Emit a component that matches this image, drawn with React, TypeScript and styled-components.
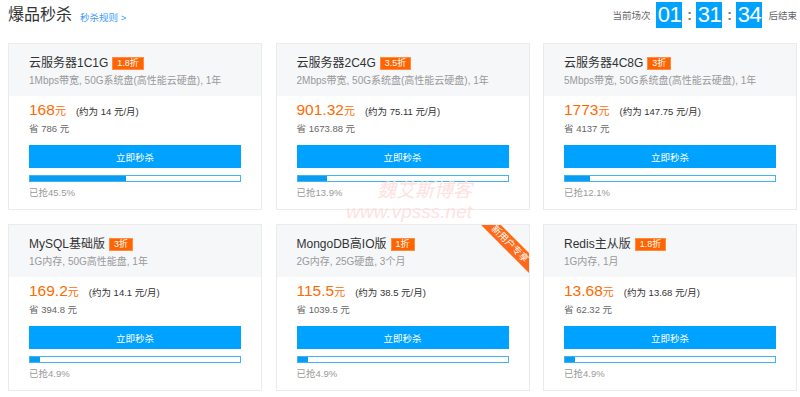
import React from "react";
import styled, { createGlobalStyle } from "styled-components";

const GlobalStyle = createGlobalStyle`
  * { box-sizing: border-box; }
  html, body { margin: 0; padding: 0; background: #fff; }
  body { font-family: "Liberation Sans", "Noto Sans CJK SC", Arial, sans-serif; color: #333; }
`;

const Page = styled.div`
  position: relative;
  width: 800px;
  height: 397px;
  padding: 0 3px 0 8px;
  overflow: hidden;
`;

const TopBar = styled.div`
  height: 30px;
  margin-bottom: 13px;
  display: flex;
  align-items: center;
  justify-content: space-between;
`;

const TitleGroup = styled.div`
  display: flex;
  align-items: center;
  gap: 8px;
`;

const Heading = styled.h2`
  margin: 0;
  font-size: 16px;
  font-weight: normal;
  color: #333;
  line-height: 20px;
`;

const RuleLink = styled.a`
  font-size: 9.5px;
  color: #3d9bff;
  text-decoration: none;
  margin-top: 3px;
`;

const Countdown = styled.div`
  display: flex;
  align-items: center;
`;

const CountLabel = styled.span<{ $side: "left" | "right" }>`
  font-size: 9.5px;
  color: #666;
  ${(p) => (p.$side === "left" ? "margin-right: 6px;" : "margin-left: 6px;")}
`;

const TimeBox = styled.span`
  width: 26px;
  height: 26px;
  background: #00a2ff;
  color: #fff;
  font-size: 22px;
  line-height: 26px;
  text-align: center;
  letter-spacing: -0.5px;
`;

const Colon = styled.span`
  width: 14px;
  text-align: center;
  color: #777;
  font-size: 14px;
  font-weight: bold;
`;

const Grid = styled.div`
  display: grid;
  grid-template-columns: repeat(3, 254px);
  column-gap: 13.5px;
  row-gap: 14px;
`;

const Card = styled.div`
  position: relative;
  border: 1px solid #ebebeb;
  background: #fff;
  overflow: hidden;
`;

const CardHeader = styled.div`
  background: #f6f7f9;
  padding: 11px 20px 9px;
`;

const TitleRow = styled.div`
  display: flex;
  align-items: center;
  height: 16px;
`;

const Title = styled.span`
  font-size: 12px;
  color: #333;
  line-height: 16px;
`;

const Badge = styled.span`
  margin-left: 4px;
  height: 13px;
  line-height: 11px;
  padding: 0 4px;
  font-size: 9px;
  color: #fff;
  background: #ff6400;
  border: 1px solid #ff8c45;
`;

const SubTitle = styled.div`
  margin-top: 4px;
  font-size: 10px;
  line-height: 12px;
  color: #999;
  white-space: nowrap;
`;

const CardBody = styled.div`
  padding: 4px 20px 10px;
`;

const PriceRow = styled.div`
  display: flex;
  align-items: baseline;
  height: 20px;
  line-height: 20px;
`;

const Price = styled.span`
  font-size: 15.5px;
  color: #ff6a00;
`;

const Unit = styled.span`
  font-size: 11px;
  color: #ff6a00;
`;

const Monthly = styled.span`
  margin-left: 10px;
  font-size: 9.5px;
  color: #333;
`;

const Save = styled.div`
  margin-top: 2px;
  font-size: 9.5px;
  line-height: 14px;
  color: #666;
`;

const BuyButton = styled.button`
  display: block;
  width: 100%;
  height: 23px;
  margin-top: 9px;
  border: none;
  background: #00a2ff;
  color: #fff;
  font-family: inherit;
  font-size: 9.5px;
  padding: 0;
  cursor: pointer;
`;

const Progress = styled.div`
  margin-top: 7px;
  height: 7px;
  border: 1px solid #3fb4f5;
  background: #fff;
`;

const ProgressFill = styled.div`
  height: 100%;
  background: #0a9cf0;
`;

const Sold = styled.div`
  margin-top: 4px;
  font-size: 9.5px;
  line-height: 13px;
  color: #999;
`;

const Ribbon = styled.div`
  position: absolute;
  top: 12px;
  right: -26px;
  width: 90px;
  height: 14px;
  line-height: 14px;
  background: #ff6a1a;
  color: #fff;
  font-size: 9.5px;
  text-align: center;
  transform: rotate(45deg);
`;

const Watermark = styled.div`
  position: absolute;
  left: 338px;
  top: 180px;
  width: 134px;
  text-align: right;
  color: #fde2e2;
  font-style: italic;
  pointer-events: none;
  line-height: 21px;
`;

const WatermarkCn = styled.div`
  font-size: 19px;
`;

const WatermarkEn = styled.div`
  font-size: 19px;
`;

type Item = {
  title: string;
  badge: string;
  spec: string;
  price: string;
  monthly: string;
  save: string;
  sold: number;
  ribbon?: boolean;
};

const items: Item[] = [
  { title: "云服务器1C1G", badge: "1.8折", spec: "1Mbps带宽, 50G系统盘(高性能云硬盘), 1年", price: "168", monthly: "14", save: "786", sold: 45.5 },
  { title: "云服务器2C4G", badge: "3.5折", spec: "2Mbps带宽, 50G系统盘(高性能云硬盘), 1年", price: "901.32", monthly: "75.11", save: "1673.88", sold: 13.9 },
  { title: "云服务器4C8G", badge: "3折", spec: "5Mbps带宽, 50G系统盘(高性能云硬盘), 1年", price: "1773", monthly: "147.75", save: "4137", sold: 12.1 },
  { title: "MySQL基础版", badge: "3折", spec: "1G内存, 50G高性能盘, 1年", price: "169.2", monthly: "14.1", save: "394.8", sold: 4.9 },
  { title: "MongoDB高IO版", badge: "1折", spec: "2G内存, 25G硬盘, 3个月", price: "115.5", monthly: "38.5", save: "1039.5", sold: 4.9, ribbon: true },
  { title: "Redis主从版", badge: "1.8折", spec: "1G内存, 1月", price: "13.68", monthly: "13.68", save: "62.32", sold: 4.9 },
];

function ProductCard({ item }: { item: Item }) {
  return (
    <Card>
      <CardHeader>
        <TitleRow>
          <Title>{item.title}</Title>
          <Badge>{item.badge}</Badge>
        </TitleRow>
        <SubTitle>{item.spec}</SubTitle>
      </CardHeader>
      <CardBody>
        <PriceRow>
          <Price>{item.price}</Price>
          <Unit>元</Unit>
          <Monthly>(约为 {item.monthly} 元/月)</Monthly>
        </PriceRow>
        <Save>省 {item.save} 元</Save>
        <BuyButton>立即秒杀</BuyButton>
        <Progress>
          <ProgressFill style={{ width: `${item.sold}%` }} />
        </Progress>
        <Sold>已抢{item.sold}%</Sold>
      </CardBody>
      {item.ribbon && <Ribbon>新用户专享</Ribbon>}
    </Card>
  );
}

export default function App() {
  return (
    <>
      <GlobalStyle />
      <Page>
        <TopBar>
          <TitleGroup>
            <Heading>爆品秒杀</Heading>
            <RuleLink href="#">秒杀规则 &gt;</RuleLink>
          </TitleGroup>
          <Countdown>
            <CountLabel $side="left">当前场次</CountLabel>
            <TimeBox>01</TimeBox>
            <Colon>:</Colon>
            <TimeBox>31</TimeBox>
            <Colon>:</Colon>
            <TimeBox>34</TimeBox>
            <CountLabel $side="right">后结束</CountLabel>
          </Countdown>
        </TopBar>
        <Grid>
          {items.map((it) => (
            <ProductCard key={it.title} item={it} />
          ))}
        </Grid>
        <Watermark>
          <WatermarkCn>魏艾斯博客</WatermarkCn>
          <WatermarkEn>www.vpsss.net</WatermarkEn>
        </Watermark>
      </Page>
    </>
  );
}
